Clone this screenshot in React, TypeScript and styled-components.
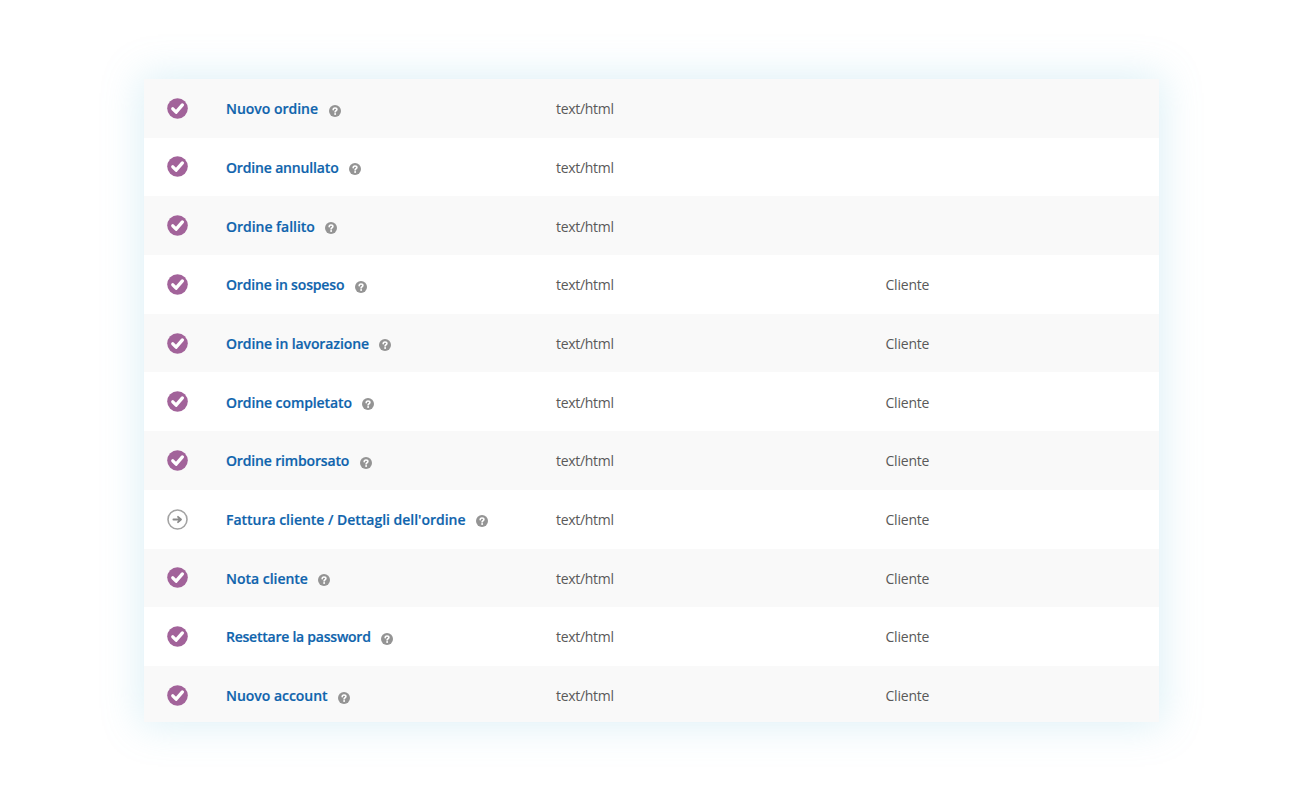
import React from "react";
import styled, { createGlobalStyle } from "styled-components";

const Global = createGlobalStyle`
  html, body { margin: 0; padding: 0; background: #fff; }
  body { font-family: "Open Sans", "Noto Sans", sans-serif; }
`;

const Page = styled.div`
  width: 1300px;
  height: 792px;
  padding: 79px 141px 0 144px;
  box-sizing: border-box;
  overflow: hidden;
`;

const Table = styled.div`
  width: 1015px;
  display: flex;
  flex-direction: column;
  background: #fff;
  box-shadow: 0 0 36px 4px rgba(125, 200, 225, 0.25);
`;

const Row = styled.div`
  height: 58.7px;
  flex: none;
  overflow: hidden;
  display: grid;
  grid-template-columns: 82px 330px 329.5px 1fr;
  grid-auto-rows: 58.7px;
  align-items: center;
  box-sizing: border-box;
  padding-top: 0.3px;
  &:nth-child(odd) { background: #f9f9f9; }
  &:last-child { height: 56px; }
`;

const StatusCell = styled.div`
  display: flex;
  padding-left: 23px;
  position: relative;
  top: -0.4px;
`;

const NameCell = styled.div`
  display: flex;
  align-items: center;
`;

const Name = styled.a<{ $track: number }>`
  color: #0f64ad;
  font-size: 14px;
  font-weight: 600;
  letter-spacing: ${(p) => p.$track}px;
  -webkit-text-stroke: 0.2px #0f64ad;
  white-space: nowrap;
`;

const Help = styled.svg`
  width: 12px;
  height: 12px;
  margin-left: 10.5px;
  flex: none;
  position: relative;
  top: 2px;
`;

const Cell = styled.div<{ $track: number }>`
  color: #595959;
  font-size: 14px;
  letter-spacing: ${(p) => p.$track}px;
`;

const Check = () => (
  <svg width="21" height="21" viewBox="0 0 21 21">
    <circle cx="10.5" cy="10.5" r="10.3" fill="#a2639a" />
    <path d="M5.8 10.8 L9.1 14.2 L15.4 6.9" fill="none" stroke="#fff" strokeWidth="3.3" strokeLinecap="round" strokeLinejoin="round" />
  </svg>
);

const Manual = () => (
  <svg width="21" height="21" viewBox="0 0 21 21">
    <circle cx="10.5" cy="10.5" r="9.5" fill="#fff" stroke="#a3a3a3" strokeWidth="1.6" />
    <path d="M6.4 10.5 H14 M11 7.8 L14 10.5 L11 13.2" fill="none" stroke="#8a8a8a" strokeWidth="1.8" strokeLinecap="round" strokeLinejoin="round" />
  </svg>
);

const HelpIcon = () => (
  <Help viewBox="0 0 12 12">
    <circle cx="6" cy="6" r="6" fill="#949494" />
    <path d="M4.2 4.7 C4.2 3.6 5 3 6 3 C7 3 7.9 3.6 7.9 4.6 C7.9 5.7 6.1 5.8 6.1 7" fill="none" stroke="#fff" strokeWidth="1.6" strokeLinecap="round" />
    <circle cx="6.1" cy="9.1" r="1" fill="#fff" />
  </Help>
);

const rows: { name: string; track: number; manual?: boolean; to?: string }[] = [
  { name: "Nuovo ordine", track: -0.02 },
  { name: "Ordine annullato", track: -0.16 },
  { name: "Ordine fallito", track: -0.03 },
  { name: "Ordine in sospeso", track: -0.16, to: "Cliente" },
  { name: "Ordine in lavorazione", track: -0.1, to: "Cliente" },
  { name: "Ordine completato", track: -0.1, to: "Cliente" },
  { name: "Ordine rimborsato", track: -0.16, to: "Cliente" },
  { name: "Fattura cliente / Dettagli dell'ordine", track: -0.02, manual: true, to: "Cliente" },
  { name: "Nota cliente", track: -0.02, to: "Cliente" },
  { name: "Resettare la password", track: -0.24, to: "Cliente" },
  { name: "Nuovo account", track: -0.03, to: "Cliente" },
];

export default function App() {
  return (
    <>
      <Global />
      <Page>
        <Table>
          {rows.map((r) => (
            <Row key={r.name}>
              <StatusCell>{r.manual ? <Manual /> : <Check />}</StatusCell>
              <NameCell>
                <Name $track={r.track}>{r.name}</Name>
                <HelpIcon />
              </NameCell>
              <Cell $track={-0.3}>text/html</Cell>
              <Cell $track={-0.2}>{r.to}</Cell>
            </Row>
          ))}
        </Table>
      </Page>
    </>
  );
}
